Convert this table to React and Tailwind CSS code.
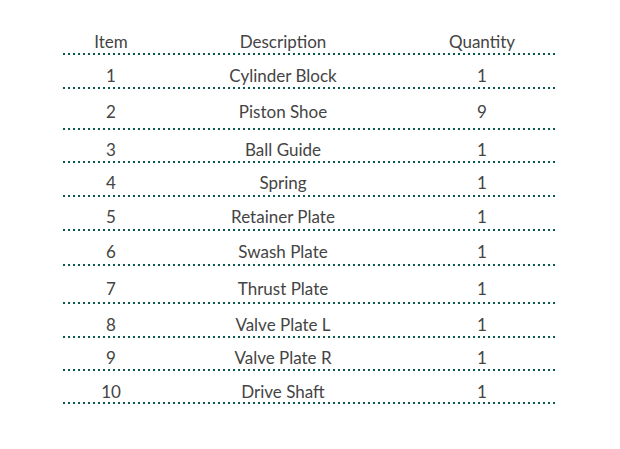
const rows = [
  { item: "1", desc: "Cylinder Block", qty: "1", h: "h-[34px]", pb: "pb-[1px]" },
  { item: "2", desc: "Piston Shoe", qty: "9", h: "h-[41px]", pb: "pb-[6px]" },
  { item: "3", desc: "Ball Guide", qty: "1", h: "h-[33px]", pb: "pb-[1px]" },
  { item: "4", desc: "Spring", qty: "1", h: "h-[34px]", pb: "pb-[2px]" },
  { item: "5", desc: "Retainer Plate", qty: "1", h: "h-[34px]", pb: "pb-[2px]" },
  { item: "6", desc: "Swash Plate", qty: "1", h: "h-[35px]", pb: "pb-[2px]" },
  { item: "7", desc: "Thrust Plate", qty: "1", h: "h-[38px]", pb: "pb-[3px]" },
  { item: "8", desc: "Valve Plate L", qty: "1", h: "h-[34px]", pb: "pb-[1px]" },
  { item: "9", desc: "Valve Plate R", qty: "1", h: "h-[33px]", pb: "pb-[1px]" },
  { item: "10", desc: "Drive Shaft", qty: "1", h: "h-[33px]", pb: "pb-0" },
];

const Row = ({ cells, h, pb }) => (
  <div className={`flex flex-col justify-end ${h}`}>
    <div className={`grid grid-cols-[96px_248px_150px] ${pb}`}>
      {cells.map((c, i) => (
        <div key={i} className="text-center leading-[20px]">
          {c}
        </div>
      ))}
    </div>
    {/* dotted rule */}
    <div className="h-[2px] bg-[repeating-linear-gradient(90deg,#0b5a50_0px,#0b5a50_2px,transparent_2px,transparent_5px)]" />
  </div>
);

export default function App() {
  return (
    <div
      className="w-[620px] h-[449px] bg-white flex justify-center pt-[32px] text-[17px] text-[#444444]"
      style={{ fontFamily: "Lato, 'Open Sans', sans-serif" }}
    >
      <div className="w-[494px]">
        <Row cells={["Item", "Description", "Quantity"]} h="h-[23px]" pb="pb-[1px]" />
        {rows.map((r) => (
          <Row key={r.item} cells={[r.item, r.desc, r.qty]} h={r.h} pb={r.pb} />
        ))}
      </div>
    </div>
  );
}
